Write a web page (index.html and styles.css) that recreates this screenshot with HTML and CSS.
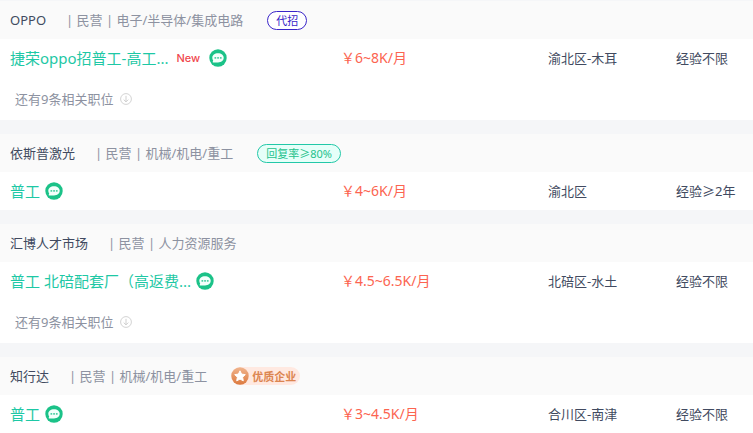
FILE: index.html
```
<!DOCTYPE html>
<html lang="zh-CN">

<head>
  <meta charset="UTF-8" />
  <title>职位列表</title>
  <link rel="stylesheet" href="styles.css">
</head>

<body>

  <!-- 公用图标 -->
  <svg class="sprite" aria-hidden="true">
    <symbol id="icon-chat" viewBox="0 0 18 18">
      <circle cx="9" cy="9" r="8.7" fill="#1bc288" />
      <path d="M9 4.200c3.300 0 5.700 1.800 5.700 4.600s-2.400 4.600-5.700 4.600H4.200c-.500 0-.700-.300-.500-.700l.500-1.300C3.600 10.700 3.300 9.800 3.300 8.800c0-2.800 2.400-4.600 5.700-4.600z" fill="#f4fffb" />
      <path d="M5.500 8h1.700v1.700H5.500zM8.200 8h1.700v1.700H8.200zM10.900 8h1.700v1.700h-1.700z" fill="#4fd0a5" />
    </symbol>
    <symbol id="icon-down" viewBox="0 0 12 12">
      <circle cx="6" cy="6" r="5.4" fill="none" stroke="#d3d3d3" />
      <path d="M6 2.800v6M3.700 6.600L6 8.900l2.300-2.300" fill="none" stroke="#d0d0d0" />
    </symbol>
  </svg>

  <main class="job-list">

    <section class="company">
      <header class="company-head">
        <a class="company-name" href="#">OPPO</a>
        <span class="company-info">| 民营 | 电子/半导体/集成电路</span>
        <span class="tag tag-agent">代招</span>
      </header>
      <div class="job-row">
        <div class="job-title">
          <a href="#">捷荣oppo招普工-高工...</a>
          <span class="new">New</span>
          <button class="chat" type="button" aria-label="在线沟通"><svg><use href="#icon-chat" /></svg></button>
        </div>
        <span class="salary">￥6~8K/月</span>
        <span>渝北区-木耳</span>
        <span>经验不限</span>
      </div>
      <button class="more" type="button">还有9条相关职位 <svg><use href="#icon-down" /></svg></button>
    </section>

    <section class="company">
      <header class="company-head">
        <a class="company-name" href="#">依斯普激光</a>
        <span class="company-info">| 民营 | 机械/机电/重工</span>
        <span class="tag tag-reply">回复率≥80%</span>
      </header>
      <div class="job-row">
        <div class="job-title">
          <a href="#">普工</a>
          <button class="chat" type="button" aria-label="在线沟通"><svg><use href="#icon-chat" /></svg></button>
        </div>
        <span class="salary">￥4~6K/月</span>
        <span>渝北区</span>
        <span>经验≥2年</span>
      </div>
    </section>

    <section class="company">
      <header class="company-head">
        <a class="company-name" href="#">汇博人才市场</a>
        <span class="company-info">| 民营 | 人力资源服务</span>
      </header>
      <div class="job-row">
        <div class="job-title">
          <a href="#">普工 北碚配套厂（高返费...</a>
          <button class="chat" type="button" aria-label="在线沟通"><svg><use href="#icon-chat" /></svg></button>
        </div>
        <span class="salary">￥4.5~6.5K/月</span>
        <span>北碚区-水土</span>
        <span>经验不限</span>
      </div>
      <button class="more" type="button">还有9条相关职位 <svg><use href="#icon-down" /></svg></button>
    </section>

    <section class="company">
      <header class="company-head">
        <a class="company-name" href="#">知行达</a>
        <span class="company-info">| 民营 | 机械/机电/重工</span>
        <span class="quality">
          <svg viewBox="0 0 18 18">
            <defs>
              <linearGradient id="bronze" x1="0" y1="0" x2="0" y2="1">
                <stop offset="0" stop-color="#f0b48d" />
                <stop offset="1" stop-color="#dc7a3f" />
              </linearGradient>
            </defs>
            <circle cx="9" cy="9" r="8.7" fill="url(#bronze)" />
            <path d="M9 3.800l1.600 3.300 3.700.500-2.700 2.600.700 3.600L9 12.100l-3.300 1.700.700-3.600-2.700-2.600 3.700-.500z" fill="#fff" stroke="#fff" stroke-linejoin="round" />
          </svg>
          优质企业
        </span>
      </header>
      <div class="job-row">
        <div class="job-title">
          <a href="#">普工</a>
          <button class="chat" type="button" aria-label="在线沟通"><svg><use href="#icon-chat" /></svg></button>
        </div>
        <span class="salary">￥3~4.5K/月</span>
        <span>合川区-南津</span>
        <span>经验不限</span>
      </div>
    </section>

  </main>

</body>

</html>
```
FILE: styles.css
```
* {
  box-sizing: border-box;
}

body {
  margin: 0;
  padding-top: 1px;
  font-family: "Noto Sans", "Noto Sans CJK SC", sans-serif;
  font-size: 13px;
  line-height: 20px;
  color: #414a60;
  background: #f5f6f8;
}

a {
  color: inherit;
  text-decoration: none;
}

button {
  padding: 0;
  border: none;
  background: none;
  font: inherit;
  color: inherit;
  cursor: pointer;
}

.sprite {
  display: none;
}

.job-list {
  display: flex;
  flex-direction: column;
  gap: 14px;
}

.company {
  background: #fff;
}

.company-head {
  display: flex;
  align-items: center;
  height: 38px;
  padding: 0 10px;
  background: #fafafa;
  white-space: nowrap;
}

.company-info {
  margin-left: 20px;
  color: #8d92a1;
}

.tag {
  margin-left: 24px;
  padding: 0 8px;
  border: 1px solid;
  border-radius: 10px;
  font-size: 11px;
  line-height: 17px;
}

.tag-agent {
  color: #3a25c9;
  background: #fff;
}

.tag-reply {
  color: #1fc28c;
  border-color: #22c8a8;
  background: #e6fff9;
}

.quality {
  display: flex;
  align-items: center;
  gap: 3px;
  margin-left: 24px;
  padding-right: 4px;
  border-radius: 9px;
  background: #ffe9e1;
  color: #dc8550;
  font-size: 11px;
  font-weight: bold;
  line-height: 17px;
}

.quality svg {
  width: 18px;
  height: 18px;
}

.job-row {
  display: grid;
  grid-template-columns: 331fr 207fr 128fr 77fr;
  align-items: center;
  height: 38px;
  padding-left: 10px;
  white-space: nowrap;
}

.job-title {
  display: flex;
  align-items: center;
  gap: 5px;
  font-size: 15px;
  color: #1ec8a5;
}

.new {
  margin-left: 3px;
  font-family: Inter, sans-serif;
  font-size: 11px;
  font-weight: 500;
  color: #f0484e;
}

.new + .chat {
  margin-left: 4px;
}

.chat svg {
  display: block;
  width: 18px;
  height: 18px;
}

.salary {
  font-size: 14px;
  color: #fc6450;
}

.more {
  display: flex;
  align-items: center;
  gap: 7px;
  height: 43px;
  padding-left: 15px;
  color: #8d92a1;
}

.more svg {
  width: 12px;
  height: 12px;
}
```
